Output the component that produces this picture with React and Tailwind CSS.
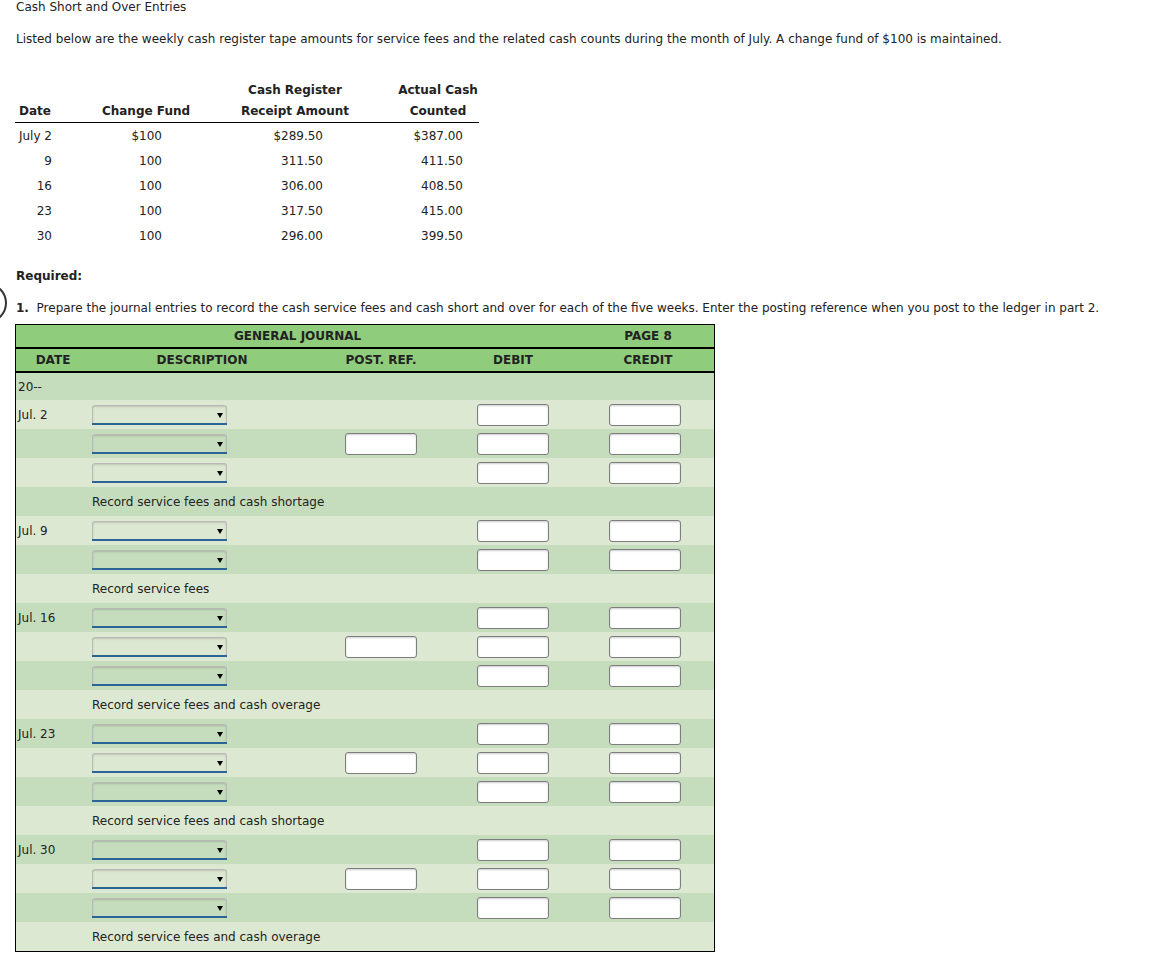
import React from "react";

const font = { fontFamily: '"DejaVu Sans", Verdana, sans-serif' };

const cashRows = [
  ["July 2", "$100", "$289.50", "$387.00"],
  ["9", "100", "311.50", "411.50"],
  ["16", "100", "306.00", "408.50"],
  ["23", "100", "317.50", "415.00"],
  ["30", "100", "296.00", "399.50"],
];

const entries = [
  { date: "Jul. 2", lines: [false, true, false], desc: "Record service fees and cash shortage" },
  { date: "Jul. 9", lines: [false, false], desc: "Record service fees" },
  { date: "Jul. 16", lines: [false, true, false], desc: "Record service fees and cash overage" },
  { date: "Jul. 23", lines: [false, true, false], desc: "Record service fees and cash shortage" },
  { date: "Jul. 30", lines: [false, true, false], desc: "Record service fees and cash overage" },
];

const SelectBox = () => (
  <div className="relative ml-[2px] h-[20px] w-[135px] rounded-t-[3px] border border-b-0 border-[#b9b9b9] shadow-[inset_0_1px_2px_rgba(0,0,0,0.15)]">
    <div className="absolute inset-x-[-1px] bottom-0 h-[2px] bg-[#2b6496]" />
    <div className="absolute right-[3px] top-[7px] h-0 w-0 border-x-[3px] border-t-[5px] border-x-transparent border-t-black" />
  </div>
);

const Field = () => (
  <div className="h-[22px] w-[72px] rounded-[3px] border border-[#7d7d7d] bg-white shadow-[inset_0_1px_2px_rgba(0,0,0,0.2)]" />
);

const cols = "grid grid-cols-[74px_228px_126px_138px_132px]";

export default function App() {
  const rows = [];
  rows.push({ kind: "year" });
  entries.forEach((e) => {
    e.lines.forEach((post, i) => rows.push({ kind: "line", date: i === 0 ? e.date : "", post }));
    rows.push({ kind: "desc", text: e.desc });
  });

  return (
    <div className="relative min-h-[958px] bg-white text-[12px] text-[#222]" style={font}>
      <svg className="absolute left-0 top-[281px]" width="8" height="44" viewBox="0 0 8 44">
        <circle cx="-13" cy="22" r="19" fill="none" stroke="#333" strokeWidth="2" />
      </svg>

      <div className="pl-4">
        <p className="leading-[14px]">Cash Short and Over Entries</p>
        <p className="mt-[18px] leading-[14px]">
          Listed below are the weekly cash register tape amounts for service fees and the related cash counts during the month of July. A change fund of $100 is maintained.
        </p>
      </div>

      <div className="ml-[15px] mt-[34px] w-[464px]">
        <div className="grid grid-cols-[65px_132px_166px_120px] border-b border-black font-bold leading-[21px]">
          <div />
          <div />
          <div className="text-center">Cash Register</div>
          <div className="text-center">Actual Cash</div>
          <div className="pl-1">Date</div>
          <div className="text-center">Change Fund</div>
          <div className="text-center">Receipt Amount</div>
          <div className="text-center">Counted</div>
        </div>
        {cashRows.map((r, i) => (
          <div key={i} className="grid h-[25px] grid-cols-[65px_132px_166px_120px] items-center">
            <div className="pr-[28px] text-right">{r[0]}</div>
            <div className="pr-[50px] text-right">{r[1]}</div>
            <div className="pr-[55px] text-right">{r[2]}</div>
            <div className="pr-[35px] text-right">{r[3]}</div>
          </div>
        ))}
      </div>

      <div className="pl-4">
        <p className="mt-[21px] font-bold leading-[14px]">Required:</p>
        <p className="mt-[18px] leading-[14px]">
          <span className="font-bold">1.</span>&nbsp; Prepare the journal entries to record the cash service fees and cash short and over for each of the five weeks. Enter the posting reference when you post to the ledger in part 2.
        </p>
      </div>

      <div className="ml-[15px] mt-[9px] w-[700px] border border-black">
        <div className={`${cols} h-[22px] items-center bg-[#8fcc7b] font-bold`}>
          <div className="col-span-4 pl-[218px]">GENERAL JOURNAL</div>
          <div className="text-center">PAGE 8</div>
        </div>
        <div className="h-[2px] bg-black" />
        <div className={`${cols} h-[22px] items-center bg-[#8fcc7b] font-bold`}>
          <div className="text-center">DATE</div>
          <div className="pr-[4px] text-center">DESCRIPTION</div>
          <div className="text-center">POST. REF.</div>
          <div className="text-center">DEBIT</div>
          <div className="text-center">CREDIT</div>
        </div>
        <div className="h-[2px] bg-black" />
        {rows.map((r, i) => (
          <div
            key={i}
            className={`${cols} ${i === 0 ? "h-[27px]" : "h-[29px]"} items-center ${i % 2 === 0 ? "bg-[#c5dcbd]" : "bg-[#dde8d2]"}`}
          >
            {r.kind === "year" && <div className="pl-[2px]">20--</div>}
            {r.kind === "line" && (
              <>
                <div className="pl-[2px]">{r.date}</div>
                <div>
                  <SelectBox />
                </div>
                <div className="flex justify-center">{r.post && <Field />}</div>
                <div className="flex justify-center">
                  <Field />
                </div>
                <div className="flex justify-center pr-[6px]">
                  <Field />
                </div>
              </>
            )}
            {r.kind === "desc" && (
              <>
                <div />
                <div className="col-span-4 pl-[2px]">{r.text}</div>
              </>
            )}
          </div>
        ))}
      </div>
    </div>
  );
}
